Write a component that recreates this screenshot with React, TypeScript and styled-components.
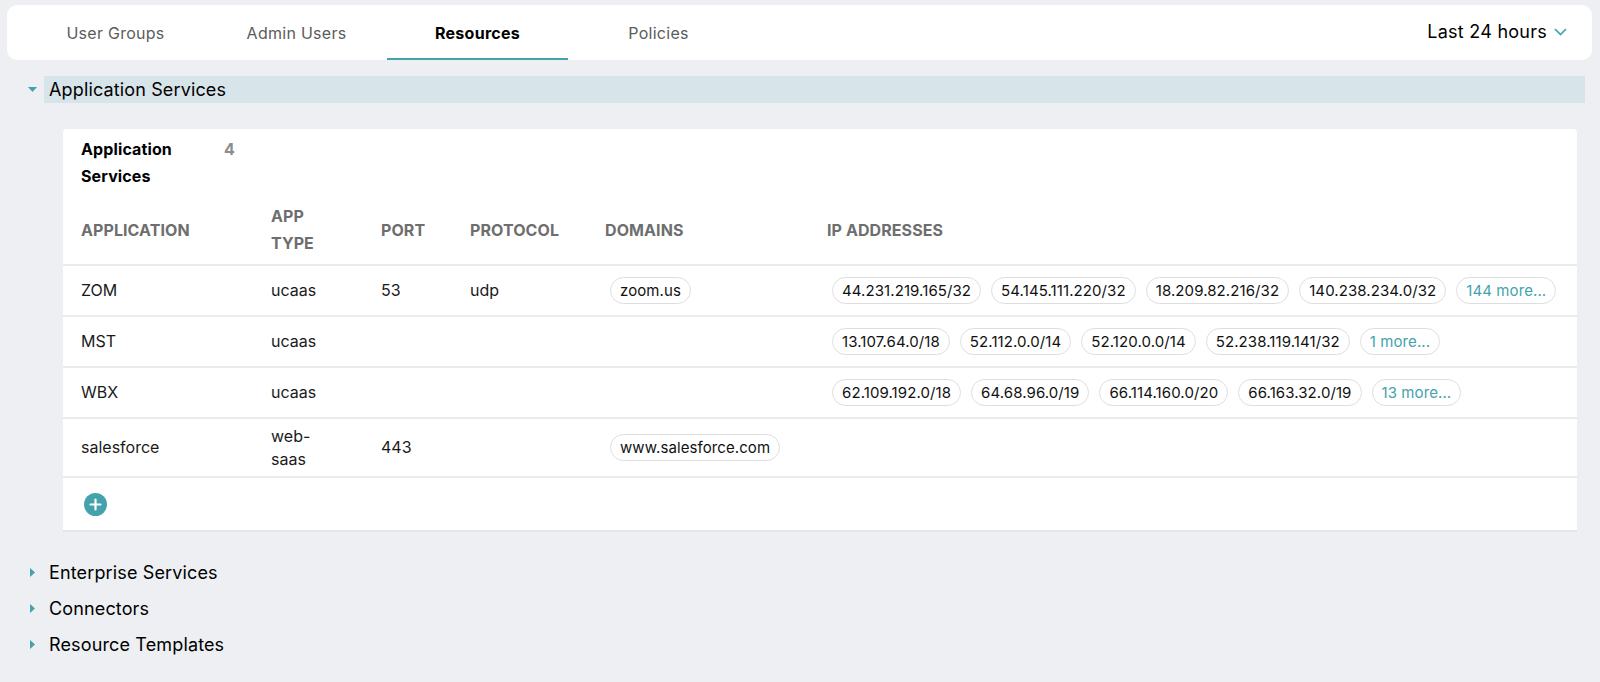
import React from 'react';
import styled, { createGlobalStyle } from 'styled-components';

const GlobalStyle = createGlobalStyle`
  html, body {
    margin: 0;
    padding: 0;
    background: #edeff3;
  }
  body {
    font-family: Inter, 'Liberation Sans', sans-serif;
    color: #000;
    -webkit-font-smoothing: antialiased;
  }
  * { box-sizing: border-box; }
`;

const TEAL = '#43a3ac';
const COLUMNS = '190px 110px 89px 135px 222px 1fr';

const Page = styled.div`
  width: 1600px;
  height: 682px;
  overflow: hidden;
  padding: 5px 8px 0 7px;
`;

const TopBar = styled.div`
  height: 55px;
  background: #fff;
  border-radius: 10px;
  display: flex;
  justify-content: space-between;
  padding: 0 25px 0 18px;
`;

const Tabs = styled.div`
  display: flex;
`;

const Tab = styled.div<{ $active?: boolean }>`
  width: 181px;
  height: 55px;
  display: flex;
  align-items: center;
  justify-content: center;
  padding-top: 2px;
  font-size: 16px;
  letter-spacing: 0.27px;
  font-weight: ${({ $active }) => ($active ? 700 : 400)};
  color: ${({ $active }) => ($active ? '#000' : '#5c5c5c')};
  border-bottom: 2px solid ${({ $active }) => ($active ? TEAL : 'transparent')};
`;

const Range = styled.div`
  display: flex;
  align-items: center;
  gap: 7px;
  font-size: 18px;
  letter-spacing: 0.25px;
  padding-bottom: 2px;
`;

const Sections = styled.div`
  padding-top: 16px;
`;

const SectionRow = styled.div`
  display: flex;
  align-items: center;
  height: 27px;
  padding-right: 7px;
`;

const Caret = styled.div`
  width: 37px;
  display: flex;
  justify-content: center;
  padding-left: 13px;
`;

const SectionTitle = styled.div<{ $open?: boolean }>`
  flex: 1;
  height: 27px;
  line-height: 27px;
  font-size: 18px;
  letter-spacing: 0.14px;
  padding-left: 5px;
  background: ${({ $open }) => ($open ? '#d7e4e9' : 'transparent')};
`;

const ClosedList = styled.div`
  display: flex;
  flex-direction: column;
  gap: 9px;
  padding-top: 27px;
`;

const Card = styled.div`
  margin: 26px 15px 0 56px;
  height: 403px;
  background: #fff;
  border-radius: 4px 4px 0 0;
  border-bottom: 2px solid #e4e6e8;
  padding-top: 7px;
`;

const CardHeader = styled.div`
  display: flex;
  padding-left: 18px;
  height: 60px;
  font-size: 16px;
  font-weight: 700;
  letter-spacing: 0.12px;
  line-height: 27px;
`;

const CardTitle = styled.div`
  width: 143px;
`;

const CardCount = styled.div`
  color: #8c8c8c;
`;

const HeadRow = styled.div`
  display: grid;
  grid-template-columns: ${COLUMNS};
  align-items: center;
  height: 70px;
  padding-left: 18px;
  border-bottom: 2px solid #ebebeb;
  font-size: 16px;
  font-weight: 700;
  letter-spacing: 0.08px;
  line-height: 27px;
  color: #6e6e6e;
`;

const Row = styled.div<{ $tall?: boolean }>`
  display: grid;
  grid-template-columns: ${COLUMNS};
  align-items: center;
  height: ${({ $tall }) => ($tall ? 59 : 51)}px;
  padding-left: 18px;
  border-bottom: 2px solid #ebebeb;
  font-size: 16px;
  line-height: 23px;
  color: #1a1a1a;
`;

const ChipCell = styled.div`
  display: flex;
  gap: 10px;
  padding-left: 5px;
`;

const Chip = styled.div<{ $more?: boolean }>`
  height: 27px;
  line-height: 25px;
  padding: 0 9px;
  border: 1px solid #dedede;
  border-radius: 14px;
  font-size: 15px;
  letter-spacing: 0.09px;
  white-space: nowrap;
  color: ${({ $more }) => ($more ? TEAL : '#111')};
`;

const AddRow = styled.div`
  padding: 15px 0 0 21px;
  display: flex;
`;

const CaretDown = () => (
  <svg width="9" height="5" viewBox="0 0 9 5">
    <path d="M0 0h9L4.5 5z" fill={TEAL} />
  </svg>
);

const CaretRight = () => (
  <svg width="5" height="9" viewBox="0 0 5 9">
    <path d="M0 0l5 4.5L0 9z" fill={TEAL} />
  </svg>
);

const Chevron = () => (
  <svg width="13" height="8" viewBox="0 0 13 8">
    <path d="M1 1l5.5 5.5L12 1" fill="none" stroke={TEAL} strokeWidth="1.7" />
  </svg>
);

const AddIcon = () => (
  <svg width="23" height="23" viewBox="0 0 23 23">
    <circle cx="11.5" cy="11.5" r="11.5" fill={TEAL} />
    <path d="M11.5 6.5v10M6.5 11.5h10" stroke="#fff" strokeWidth="2.2" strokeLinecap="round" />
  </svg>
);

const tabs = ['User Groups', 'Admin Users', 'Resources', 'Policies'];

const apps = [
  {
    name: 'ZOM',
    type: 'ucaas',
    port: '53',
    protocol: 'udp',
    domains: ['zoom.us'],
    ips: ['44.231.219.165/32', '54.145.111.220/32', '18.209.82.216/32', '140.238.234.0/32'],
    more: '144 more...',
  },
  {
    name: 'MST',
    type: 'ucaas',
    ips: ['13.107.64.0/18', '52.112.0.0/14', '52.120.0.0/14', '52.238.119.141/32'],
    more: '1 more...',
  },
  {
    name: 'WBX',
    type: 'ucaas',
    ips: ['62.109.192.0/18', '64.68.96.0/19', '66.114.160.0/20', '66.163.32.0/19'],
    more: '13 more...',
  },
  {
    name: 'salesforce',
    type: 'web-saas',
    port: '443',
    domains: ['www.salesforce.com'],
    tall: true,
  },
];

const App = () => {
  return (
    <Page>
      <GlobalStyle />
      <TopBar>
        <Tabs>
          {tabs.map((t) => (
            <Tab key={t} $active={t === 'Resources'}>
              {t}
            </Tab>
          ))}
        </Tabs>
        <Range>
          Last 24 hours <Chevron />
        </Range>
      </TopBar>
      <Sections>
        <SectionRow>
          <Caret>
            <CaretDown />
          </Caret>
          <SectionTitle $open>Application Services</SectionTitle>
        </SectionRow>
        <Card>
          <CardHeader>
            <CardTitle>
              Application
              <br />
              Services
            </CardTitle>
            <CardCount>4</CardCount>
          </CardHeader>
          <HeadRow>
            <div>APPLICATION</div>
            <div>
              APP
              <br />
              TYPE
            </div>
            <div>PORT</div>
            <div>PROTOCOL</div>
            <div>DOMAINS</div>
            <div>IP ADDRESSES</div>
          </HeadRow>
          {apps.map((a) => (
            <Row key={a.name} $tall={a.tall}>
              <div>{a.name}</div>
              <div>{a.type === 'web-saas' ? <>web-<br />saas</> : a.type}</div>
              <div>{a.port}</div>
              <div>{a.protocol}</div>
              <ChipCell>
                {a.domains?.map((d) => <Chip key={d}>{d}</Chip>)}
              </ChipCell>
              <ChipCell>
                {a.ips?.map((ip) => <Chip key={ip}>{ip}</Chip>)}
                {a.more && <Chip $more>{a.more}</Chip>}
              </ChipCell>
            </Row>
          ))}
          <AddRow>
            <AddIcon />
          </AddRow>
        </Card>
        <ClosedList>
          {['Enterprise Services', 'Connectors', 'Resource Templates'].map((s) => (
            <SectionRow key={s}>
              <Caret>
                <CaretRight />
              </Caret>
              <SectionTitle>{s}</SectionTitle>
            </SectionRow>
          ))}
        </ClosedList>
      </Sections>
    </Page>
  );
};

export default App;
